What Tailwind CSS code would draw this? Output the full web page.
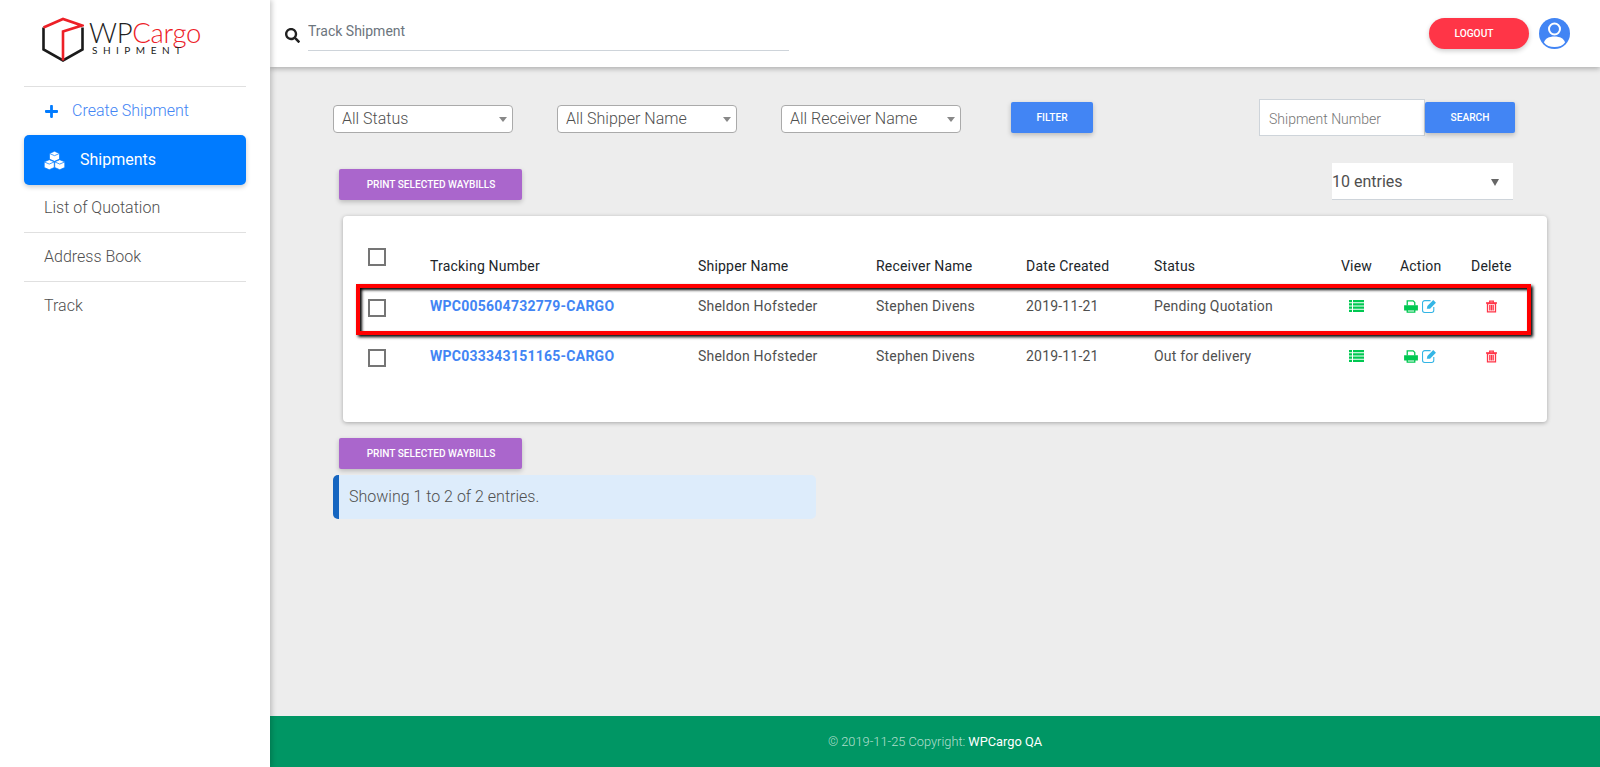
<!DOCTYPE html>
<html lang="en">
<head>
  <meta charset="UTF-8">
  <title>WPCargo Shipment</title>
  <script src="https://cdn.jsdelivr.net/npm/@tailwindcss/browser@4"></script>
</head>
<body class="bg-[#ededed] h-screen overflow-hidden flex font-['Roboto',sans-serif] text-[#4f4f4f]">
  <!-- Sidebar -->
  <aside class="w-[270px] shrink-0 bg-white shadow-[2px_0_5px_rgba(0,0,0,0.2)] z-20">
    <div class="h-[87px] mx-[24px] border-b border-[#e0e0e0] flex items-start pl-[18px] pt-[17px]">
      <svg class="w-[42px] h-[45px] shrink-0" viewBox="0 0 42 44" fill="none" stroke-width="2.6">
        <path d="M1.500 10V32L21 43L40.500 32V10" stroke="#1a1a1a"/>
        <path d="M1.500 10L21 1.500L40 8L21 14V43" stroke="#ed2027"/>
      </svg>
      <div class="ml-[5px] mt-[4px] font-['Lato',sans-serif]">
        <div class="text-[27.500px] leading-[24px] font-light tracking-[-0.3px] text-[#222]">WP<span class="text-[#ed2027]">Cargo</span></div>
        <div class="text-[10px] leading-[10px] font-normal tracking-[5.500px] text-[#222] ml-[3px]">SHIPMENT</div>
      </div>
    </div>
    <nav class="mx-[24px] text-[16px] font-light">
      <a class="h-[48px] flex items-center pl-[21px] text-[#4285f4]">
        <svg class="w-[13px] h-[15px] fill-[#007bff]" viewBox="0 0 448 512"><path d="M416 208H272V64c0-17.670-14.330-32-32-32h-32c-17.670 0-32 14.330-32 32v144H32c-17.670 0-32 14.330-32 32v32c0 17.670 14.330 32 32 32h144v144c0 17.670 14.330 32 32 32h32c17.670 0 32-14.330 32-32V304h144c17.670 0 32-14.330 32-32v-32c0-17.670-14.330-32-32-32z"/></svg>
        <span class="ml-[14px]">Create Shipment</span>
      </a>
      <a class="h-[50px] flex items-center pl-[20px] bg-[#007bff] rounded-[5px] text-white font-normal shadow-[0_2px_5px_rgba(0,0,0,0.2)]">
        <svg class="w-[21px] h-[19px]" viewBox="0 0 20 18" fill="#fff" stroke="#007bff" stroke-width=".7">
          <path d="M10 .2L14.800 2.300V7.700L10 9.800L5.200 7.700V2.300Z"/>
          <path d="M5 8.200L9.800 10.300V15.700L5 17.800L.2 15.700V10.300Z"/>
          <path d="M15 8.200L19.800 10.300V15.700L15 17.800L10.200 15.700V10.300Z"/>
          <path d="M5.200 2.300L10 4.400L14.800 2.300M.2 10.300L5 12.400L9.800 10.300M10.200 10.300L15 12.400L19.800 10.300" fill="none"/>
        </svg>
        <span class="ml-[15px]">Shipments</span>
      </a>
      <a class="h-[48px] pb-[2px] flex items-center pl-[20px] border-b border-[#e0e0e0]">List of Quotation</a>
      <a class="h-[49px] flex items-center pl-[20px] border-b border-[#e0e0e0]">Address Book</a>
      <a class="h-[48px] flex items-center pl-[20px]">Track</a>
    </nav>
  </aside>

  <div class="flex-1 flex flex-col min-w-0">
    <!-- Top bar -->
    <header class="h-[67px] shrink-0 bg-white shadow-[0_2px_5px_rgba(0,0,0,0.26)] z-10 flex items-start relative">
      <svg class="w-[15px] h-[15px] ml-[15px] mt-[28px] fill-[#212121]" viewBox="0 0 512 512"><path d="M505 442.700L405.300 343c-4.500-4.500-10.600-7-17-7H372c27.600-35.300 44-79.700 44-128C416 93.100 322.900 0 208 0S0 93.100 0 208s93.100 208 208 208c48.300 0 92.700-16.400 128-44v16.300c0 6.400 2.500 12.500 7 17l99.700 99.700c9.400 9.400 24.600 9.400 33.900 0l28.300-28.300c9.400-9.400 9.400-24.600.1-34zM208 336c-70.700 0-128-57.200-128-128 0-70.700 57.200-128 128-128 70.700 0 128 57.200 128 128 0 70.700-57.200 128-128 128z"/></svg>
      <input placeholder="Track Shipment" class="w-[481px] h-[34px] mt-[17px] ml-[8px] border-b border-[#ced4da] text-[14px] pb-[6px] outline-none placeholder:text-[#6c757d]">
      <button class="ml-auto mt-[18px] w-[100px] h-[31px] pr-[10px] rounded-full bg-[#ff3547] text-white text-[10.200px] font-medium shadow-[0_2px_5px_rgba(0,0,0,0.2)]">LOGOUT</button>
      <svg class="w-[31px] h-[31px] ml-[10px] mr-[30px] mt-[18px]" viewBox="0 0 31 31">
        <circle cx="15.500" cy="15.500" r="15.500" fill="#4285f4"/>
        <circle cx="15.500" cy="11" r="5.500" fill="#4285f4" stroke="#fff" stroke-width="2"/>
        <path d="M5 24.500C6 20.500 10 18.500 15.500 18.500S25 20.500 26 24.500C24 27.500 20 29 15.500 29S7 27.500 5 24.500Z" fill="#fff"/>
      </svg>
    </header>

    <!-- Page content -->
    <main class="flex-1 min-h-0">
      <div class="flex items-start ml-[63px] mr-[85px] mt-[32px] h-[37px]">
        <div class="relative w-[180px] mt-[6px]">
          <select class="appearance-none w-full h-[28px] bg-white border border-[#aaa] rounded-[4px] pl-[8px] text-[16px] font-light"><option>All Status</option></select>
          <span class="absolute right-[6px] top-[12px] border-x-[4px] border-x-transparent border-t-[5px] border-t-[#888]"></span>
        </div>
        <div class="relative w-[180px] ml-[44px] mt-[6px]">
          <select class="appearance-none w-full h-[28px] bg-white border border-[#aaa] rounded-[4px] pl-[8px] text-[16px] font-light"><option>All Shipper Name</option></select>
          <span class="absolute right-[6px] top-[12px] border-x-[4px] border-x-transparent border-t-[5px] border-t-[#888]"></span>
        </div>
        <div class="relative w-[180px] ml-[44px] mt-[6px]">
          <select class="appearance-none w-full h-[28px] bg-white border border-[#aaa] rounded-[4px] pl-[8px] text-[16px] font-light"><option>All Receiver Name</option></select>
          <span class="absolute right-[6px] top-[12px] border-x-[4px] border-x-transparent border-t-[5px] border-t-[#888]"></span>
        </div>
        <button class="ml-[50px] mt-[3px] w-[82px] h-[31px] bg-[#4285f4] text-white text-[10.200px] font-medium rounded-[2px] shadow-[0_2px_5px_rgba(0,0,0,0.22)]">FILTER</button>
        <input placeholder="Shipment Number" class="ml-auto w-[166px] h-[37px] bg-white border border-[#ced4da] pl-[9px] pt-[3px] text-[14px] font-light outline-none placeholder:text-[#757575]">
        <button class="mt-[3px] w-[90px] h-[31px] bg-[#4285f4] text-white text-[10.200px] font-medium rounded-[2px] shadow-[0_2px_5px_rgba(0,0,0,0.22)]">SEARCH</button>
      </div>

      <div class="flex items-start justify-between ml-[69px] mr-[87px] mt-[27px] h-[37px]">
        <button class="mt-[6px] w-[183px] pl-[1px] h-[31px] bg-[#aa66cc] text-white text-[10.100px] font-medium rounded-[2px] shadow-[0_2px_5px_rgba(0,0,0,0.22)]">PRINT SELECTED WAYBILLS</button>
        <div class="relative w-[181px] h-[37px] bg-white border-b border-[#ced4da] text-[16px] leading-[38px]">10 entries
          <span class="absolute right-[14px] top-[16px] border-x-[4px] border-x-transparent border-t-[7px] border-t-[#666]"></span>
        </div>
      </div>

      <!-- Shipments table -->
      <section class="relative ml-[73px] mr-[53px] mt-[16px] h-[206px] bg-white rounded-[4px] shadow-[0_1px_4px_rgba(0,0,0,0.3)] pt-[32px] pl-[25px] text-[14px]">
        <div class="grid grid-cols-[62px_268px_178px_150px_128px_187px_59px_71px_60px] h-[33px] items-start text-[#212529] tracking-[0.2px]">
          <span class="w-[18px] h-[18px] border-2 border-[#757575]"></span>
          <span class="mt-[8px]">Tracking Number</span>
          <span class="mt-[8px]">Shipper Name</span>
          <span class="mt-[8px]">Receiver Name</span>
          <span class="mt-[8px]">Date Created</span>
          <span class="mt-[8px]">Status</span>
          <span class="mt-[8px]">View</span>
          <span class="mt-[8px]">Action</span>
          <span class="mt-[8px]">Delete</span>
        </div>

        <div class="grid grid-cols-[62px_268px_178px_150px_128px_187px_59px_71px_60px] h-[50px] items-center tracking-[0.2px]">
          <span class="w-[18px] h-[18px] border-2 border-[#757575] mt-[4px]"></span>
          <a class="font-bold text-[#4285f4] tracking-[0.25px]">WPC005604732779-CARGO</a>
          <span>Sheldon Hofsteder</span>
          <span>Stephen Divens</span>
          <span>2019-11-21</span>
          <span>Pending Quotation</span>
          <svg class="w-[15px] h-[12px] ml-[8px]" viewBox="0 0 15 12" fill="#00c851"><path d="M0 0h3v2.200H0zM4 0h11v2.200H4zM0 3.300h3v2.200H0zM4 3.300h11v2.200H4zM0 6.600h3v2.200H0zM4 6.600h11v2.200H4zM0 9.800h3V12H0zM4 9.800h11V12H4z"/></svg>
          <span class="flex items-center gap-[4px] ml-[4px]">
            <svg class="w-[14px] h-[13px]" viewBox="0 0 13 12" fill="none" stroke="#00c851" stroke-width="1.200"><path d="M3 5V.7h5.500L10 2.200V5M3 8.500v2.800h7V8.500"/><path d="M.7 5.500h11.600v3.500H.7z" fill="#00c851"/></svg>
            <svg class="w-[15px] h-[14px]" viewBox="0 0 14 13" fill="none" stroke="#33b5e5" stroke-width="1"><path d="M11 7.500V10.500a2 2 0 0 1-2 2H2.500a2 2 0 0 1-2-2V3.500a2 2 0 0 1 2-2H8"/><path d="M4.500 9L5 6.500L10.500 1L13 3.500L7.500 9Z" fill="#33b5e5" stroke="none"/></svg>
          </span>
          <svg class="w-[11px] h-[13px] ml-[15px]" viewBox="0 0 11 12" fill="none" stroke="#ff3547" stroke-width="1.300"><path d="M0 2.500h11M3.700 2.500V.7h3.600v1.800"/><path d="M1.500 3h8v8.400h-8zM3.800 4.500v5.500M5.500 4.500v5.500M7.200 4.500v5.500"/></svg>
        </div>

        <div class="grid grid-cols-[62px_268px_178px_150px_128px_187px_59px_71px_60px] h-[50px] items-center tracking-[0.2px]">
          <span class="w-[18px] h-[18px] border-2 border-[#757575] mt-[4px]"></span>
          <a class="font-bold text-[#4285f4] tracking-[0.25px]">WPC033343151165-CARGO</a>
          <span>Sheldon Hofsteder</span>
          <span>Stephen Divens</span>
          <span>2019-11-21</span>
          <span>Out for delivery</span>
          <svg class="w-[15px] h-[12px] ml-[8px]" viewBox="0 0 15 12" fill="#00c851"><path d="M0 0h3v2.200H0zM4 0h11v2.200H4zM0 3.300h3v2.200H0zM4 3.300h11v2.200H4zM0 6.600h3v2.200H0zM4 6.600h11v2.200H4zM0 9.800h3V12H0zM4 9.800h11V12H4z"/></svg>
          <span class="flex items-center gap-[4px] ml-[4px]">
            <svg class="w-[14px] h-[13px]" viewBox="0 0 13 12" fill="none" stroke="#00c851" stroke-width="1.200"><path d="M3 5V.7h5.500L10 2.200V5M3 8.500v2.800h7V8.500"/><path d="M.7 5.500h11.600v3.500H.7z" fill="#00c851"/></svg>
            <svg class="w-[15px] h-[14px]" viewBox="0 0 14 13" fill="none" stroke="#33b5e5" stroke-width="1"><path d="M11 7.500V10.500a2 2 0 0 1-2 2H2.500a2 2 0 0 1-2-2V3.500a2 2 0 0 1 2-2H8"/><path d="M4.500 9L5 6.500L10.500 1L13 3.500L7.500 9Z" fill="#33b5e5" stroke="none"/></svg>
          </span>
          <svg class="w-[11px] h-[13px] ml-[15px]" viewBox="0 0 11 12" fill="none" stroke="#ff3547" stroke-width="1.300"><path d="M0 2.500h11M3.700 2.500V.7h3.600v1.800"/><path d="M1.500 3h8v8.400h-8zM3.800 4.500v5.500M5.500 4.500v5.500M7.200 4.500v5.500"/></svg>
        </div>

        <!-- Annotation box over the first row -->
        <div class="absolute left-[13px] top-[68px] w-[1175px] h-[51px] border-[4px] border-[#ff0000] shadow-[2px_2px_3px_#000,inset_2px_2px_3px_#000] pointer-events-none"></div>
      </section>

      <button class="block ml-[69px] mt-[16px] w-[183px] pl-[1px] h-[31px] bg-[#aa66cc] text-white text-[10.100px] font-medium rounded-[2px] shadow-[0_2px_5px_rgba(0,0,0,0.22)]">PRINT SELECTED WAYBILLS</button>
      <div class="ml-[63px] mt-[6px] w-[483px] h-[44px] bg-[#ddecfb] border-l-[6px] border-[#1565c0] rounded-[5px] pl-[10px] text-[16px] font-light leading-[44px]">Showing 1 to 2 of 2 entries.</div>
    </main>

    <footer class="h-[51px] shrink-0 bg-[#009664] text-center text-[12.800px] font-light leading-[51px] text-white/70">© 2019-11-25 Copyright: <span class="text-white font-normal">WPCargo QA</span></footer>
  </div>
</body>
</html>
